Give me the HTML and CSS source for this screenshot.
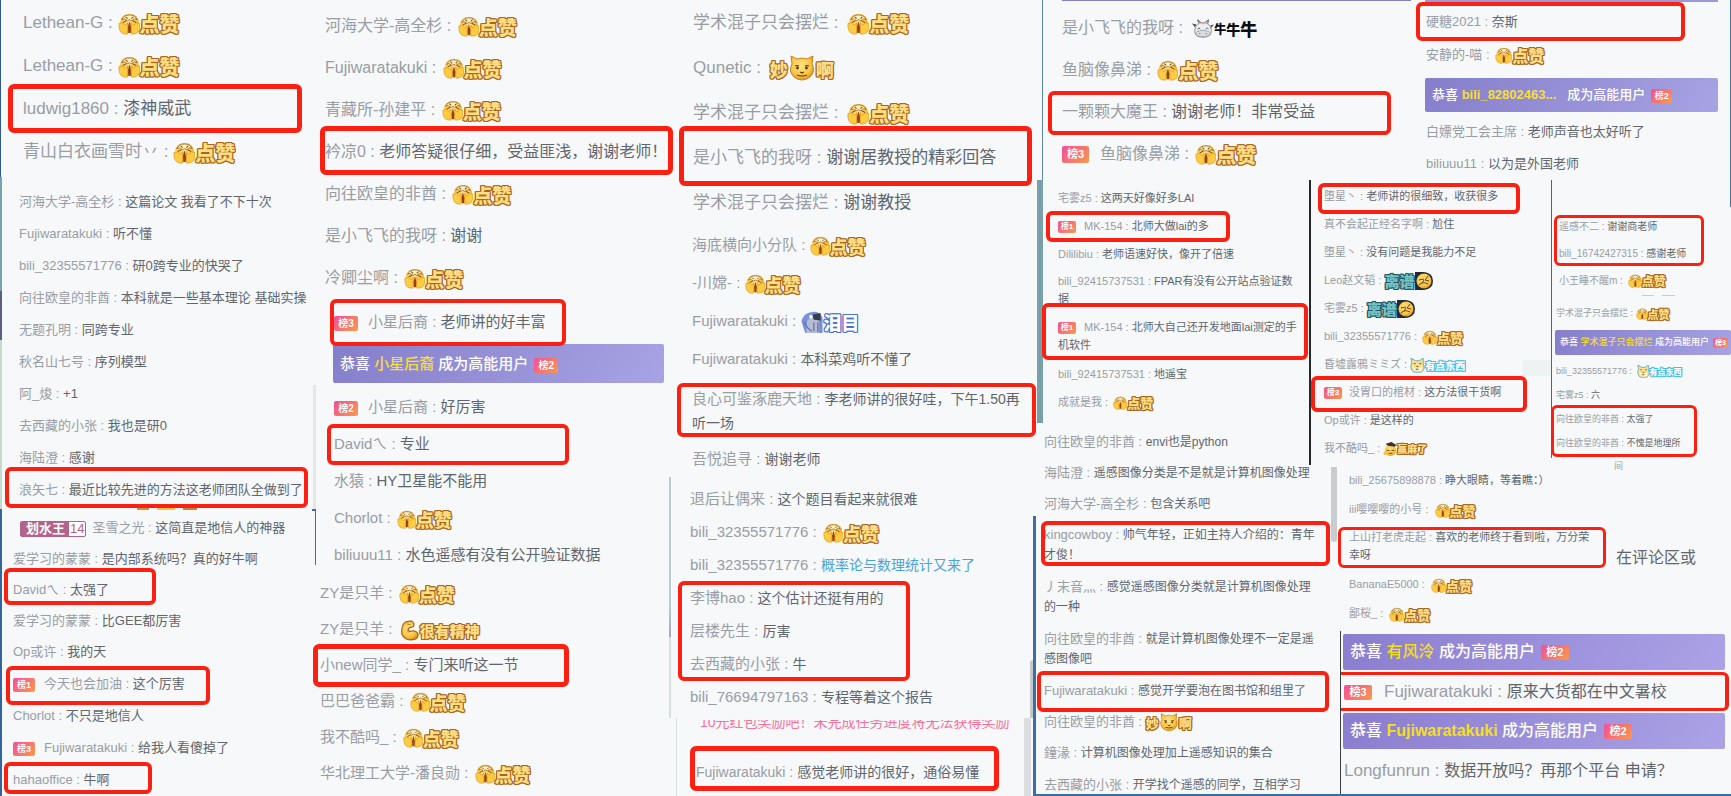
FILE: index.html
```html
<!DOCTYPE html>
<html lang="zh-CN">
<head>
<meta charset="utf-8">
<title>直播弹幕互动</title>
<link rel="stylesheet" href="styles.css">
</head>
<body>
<svg class="defs" aria-hidden="true">
  <defs>
    <radialGradient id="goldfill" cx="45%" cy="40%" r="65%"><stop offset="0" stop-color="#ffe58a"/><stop offset="0.65" stop-color="#fbc545"/><stop offset="1" stop-color="#d98a1c"/></radialGradient>
  </defs>
  <symbol id="like" viewBox="0 0 23 23">
    <path d="M2 11Q2 1 12 1t10 10-10 10T2 11z" fill="url(#goldfill)"/>
    <path d="M4 7q2-5 8-5t8 5q-3-2-4 0-2 2-4 0-2 2-4 0-1-2-4 0z" fill="#fff0bd" stroke="#8f5a20" stroke-width=".8"/>
    <path d="M8 4l2 2M16 4l-2 2M5 10l4-2M19 10l-4-2" fill="none" stroke="#7d4a18" stroke-width="1.1"/>
    <path d="M1 11q4-2 7 2l2-3v12q-8 1-9-7zM23 11q-4-2-7 2l-2-3v12q8 1 9-7z" fill="#ffcb40" stroke="#dc9524" stroke-width=".7"/>
    <path d="M12 9q2.500 6 1 12h-2q-1.500-6 1-12z" fill="#94400d"/>
  </symbol>
  <symbol id="wow" viewBox="0 0 28 28">
    <path d="M4 9L3 1l6 3q5-2 10 0l6-3-1 8q4 7-2 13-8 6-16 0Q0 16 4 9z" fill="url(#goldfill)" stroke="#c98318" stroke-width="1"/>
    <path d="M7 11q2-1 4 0M17 11q2-1 4 0M12 17l2 1 2-1M9 20q5 2 10 0" fill="none" stroke="#643710" stroke-width="1.2"/>
    <circle cx="9.500" cy="13" r="1.400" fill="#5f3711"/><circle cx="18.500" cy="13" r="1.400" fill="#5f3711"/>
  </symbol>
  <symbol id="cow" viewBox="0 0 24 22">
    <path d="M8 5L6 1l4 3M14 4l4-3-1 5" fill="#d8d8dd" stroke="#555960" stroke-width="1"/>
    <path d="M0 5l5 1-2 3zM24 6l-4 1 1 3z" fill="#50545b"/>
    <path d="M3 12Q4 4 12 4t9 8q1 8-9 8T3 12z" fill="#eceef1" stroke="#888d96" stroke-width="1"/>
    <path d="M9 4l3 2 3-2" fill="#e9a0ad"/>
    <ellipse cx="12" cy="16" rx="8" ry="3.500" fill="#d9dbe0" stroke="#888d96" stroke-width=".7"/>
    <path d="M6 11q2-2 3 0M15 11q2-2 3 0M8 16h1M15 16h1" fill="none" stroke="#50545b" stroke-width="1"/>
  </symbol>
  <symbol id="arm" viewBox="0 0 20 22">
    <path d="M2 15Q1 5 6 2l6-1q4 2 2 6l-4 1q-2 2 0 4 7-2 9 3 0 4-3 5-10 3-14-5z" fill="url(#goldfill)" stroke="#a86414" stroke-width="1.200"/>
    <path d="M7 4l4 1M9 8q-2 3 0 5" fill="none" stroke="#b8741b"/>
  </symbol>
  <symbol id="tear" viewBox="0 0 23 24">
    <path d="M1 11Q3 2 12 1q8-1 11 6v16H5z" fill="#7890d8"/>
    <path d="M7 10q5-5 12 0v13H6z" fill="#b7bdd0"/><path d="M12 4l9-2v8l-7-1z" fill="#343b50"/>
    <path d="M4 11q3 8 8 10M14 12v9M18 12v10" stroke="#6273ae" fill="none" stroke-width="1.300"/>
    <circle cx="11" cy="6" r="2" fill="#f1f3fa"/>
  </symbol>
  <symbol id="absurd" viewBox="0 0 18 18">
    <path d="M-4 0h13q9 1 9 9t-9 9H-4z" fill="#202a3c"/>
    <circle cx="9" cy="9" r="7.500" fill="url(#goldfill)"/>
    <path d="M4 8l5-1M13 4l-3 4 4 1M4 13q4-4 9-1M9 8l-2 3" fill="none" stroke="#65400f" stroke-width="1"/>
  </symbol>
  <symbol id="legit" viewBox="0 0 16 16">
    <path d="M2 5L1 0l5 3h4l4-3v6q3 6-2 9H4Q-1 11 2 5z" fill="#ffe08a" stroke="#56a9bd" stroke-width="1"/>
    <path d="M3 9q5 4 10 0l-1 5H5z" fill="#fff7dd"/><path d="M4 6h2M10 6h2M7 9h2M6 12h3" stroke="#5b4420" stroke-width="1"/>
  </symbol>
  <symbol id="win" viewBox="0 0 15 15">
    <circle cx="8" cy="9" r="6" fill="url(#goldfill)"/><path d="M3 2l6-2 5 3-1 2-8-1z" fill="#3c3330"/>
    <path d="M4 9h3M9 9h3M6 12h4" stroke="#6b4210"/><circle cx="2.500" cy="12" r="2" fill="#f8c340"/>
  </symbol>
</svg>

<main class="board">
  <div class="col">
    <section class="feed a">
      <ul>
        <li><span class="n">Lethean-G : </span><span class="emo gold"><svg><use href="#like"/></svg><b>点赞</b></span></li>
        <li><span class="n">Lethean-G : </span><span class="emo gold"><svg><use href="#like"/></svg><b>点赞</b></span></li>
        <li><span class="n">ludwig1860 : </span><span class="t">漆神威武</span><i class="mark mk-a"></i></li>
        <li><span class="n">青山白衣画雪时丷 : </span><span class="emo gold"><svg><use href="#like"/></svg><b>点赞</b></span></li>
      </ul>
    </section>
    <section class="feed b">
      <ul>
        <li><span class="n">河海大学-高全杉 : </span><span class="t">这篇论文 我看了不下十次</span></li>
        <li><span class="n">Fujiwaratakuki : </span><span class="t">听不懂</span></li>
        <li><span class="n">bili_32355571776 : </span><span class="t">研0跨专业的快哭了</span></li>
        <li><span class="n">向往欧皇的非酋 : </span><span class="t">本科就是一些基本理论 基础实操</span></li>
        <li><span class="n">无题孔明 : </span><span class="t">同跨专业</span></li>
        <li><span class="n">秋名山七号 : </span><span class="t">序列模型</span></li>
        <li><span class="n">阿_焌 : </span><span class="t">+1</span></li>
        <li><span class="n">去西藏的小张 : </span><span class="t">我也是研0</span></li>
        <li><span class="n">海陆澄 : </span><span class="t">感谢</span></li>
        <li><span class="n">浪矢七 : </span><span class="t">最近比较先进的方法这老师团队全做到了</span><i class="mark mk-b"></i></li>
      </ul>
    </section>
    <section class="feed c">
      <ul>
        <li><span class="medal"><b>划水王</b><span>14</span></span><span class="n">圣雪之光 : </span><span class="t">这简直是地信人的神器</span></li>
        <li><span class="n">爱学习的蒙蒙 : </span><span class="t">是内部系统吗？真的好牛啊</span></li>
        <li><span class="n">Davidㄟ : </span><span class="t">太强了</span><i class="mark mk-c1"></i></li>
        <li><span class="n">爱学习的蒙蒙 : </span><span class="t">比GEE都厉害</span></li>
        <li><span class="n">Op或许 : </span><span class="t">我的天</span></li>
        <li class="ranked"><b class="rank">榜1</b><span class="n">今天也会加油 : </span><span class="t">这个厉害</span><i class="mark mk-c2"></i></li>
        <li><span class="n">Chorlot : </span><span class="t">不只是地信人</span></li>
        <li class="ranked"><b class="rank">榜3</b><span class="n">Fujiwaratakuki : </span><span class="t">给我人看傻掉了</span></li>
        <li><span class="n">hahaoffice : </span><span class="t">牛啊</span><i class="mark mk-c3"></i></li>
      </ul>
    </section>
    <i class="strip s1"></i><i class="strip s2"></i><i class="strip s3"></i><i class="strip s4"></i><i class="strip s5"></i><i class="strip s6"></i><i class="strip s22"></i>
  </div>

  <div class="col">
    <section class="feed d">
      <ul>
        <li><span class="n">河海大学-高全杉 : </span><span class="emo gold"><svg><use href="#like"/></svg><b>点赞</b></span></li>
        <li><span class="n">Fujiwaratakuki : </span><span class="emo gold"><svg><use href="#like"/></svg><b>点赞</b></span></li>
        <li><span class="n">青藏所-孙建平 : </span><span class="emo gold"><svg><use href="#like"/></svg><b>点赞</b></span></li>
        <li><span class="n">衿凉0 : </span><span class="t">老师答疑很仔细，受益匪浅，谢谢老师！</span><i class="mark mk-d"></i></li>
        <li><span class="n">向往欧皇的非酋 : </span><span class="emo gold"><svg><use href="#like"/></svg><b>点赞</b></span></li>
        <li><span class="n">是小飞飞的我呀 : </span><span class="t">谢谢</span></li>
        <li><span class="n">冷卿尘啊 : </span><span class="emo gold"><svg><use href="#like"/></svg><b>点赞</b></span></li>
      </ul>
    </section>
    <section class="feed e">
      <ul>
        <li class="first"><b class="rank">榜3</b><span class="n">小星后裔 : </span><span class="t">老师讲的好丰富</span><i class="mark mk-e1"></i></li>
        <li class="banner">恭喜 <em>小星后裔</em> 成为高能用户<b class="rank">榜2</b></li>
        <li><b class="rank">榜2</b><span class="n">小星后裔 : </span><span class="t">好厉害</span></li>
        <li><span class="n">Davidㄟ : </span><span class="t">专业</span><i class="mark mk-e2"></i></li>
        <li><span class="n">水猿 : </span><span class="t">HY卫星能不能用</span></li>
        <li><span class="n">Chorlot : </span><span class="emo gold"><svg><use href="#like"/></svg><b>点赞</b></span></li>
        <li><span class="n">biliuuu11 : </span><span class="t">水色遥感有没有公开验证数据</span></li>
      </ul>
    </section>
    <section class="feed f">
      <ul>
        <li><span class="n">ZY是只羊 : </span><span class="emo gold"><svg><use href="#like"/></svg><b>点赞</b></span></li>
        <li><span class="n">ZY是只羊 : </span><span class="emo gold strong"><svg><use href="#arm"/></svg><b>很有精神</b></span></li>
        <li><span class="n">小new同学_ : </span><span class="t">专门来听这一节</span><i class="mark mk-f"></i></li>
        <li><span class="n">巴巴爸爸霸 : </span><span class="emo gold"><svg><use href="#like"/></svg><b>点赞</b></span></li>
        <li><span class="n">我不酷吗_ : </span><span class="emo gold"><svg><use href="#like"/></svg><b>点赞</b></span></li>
        <li><span class="n">华北理工大学-潘良勋 : </span><span class="emo gold"><svg><use href="#like"/></svg><b>点赞</b></span></li>
      </ul>
    </section>
    <i class="strip s7"></i><i class="strip s8"></i><i class="strip s9"></i>
  </div>

  <div class="col">
    <section class="feed g">
      <ul>
        <li><span class="n">学术混子只会摆烂 : </span><span class="emo gold"><svg><use href="#like"/></svg><b>点赞</b></span></li>
        <li><span class="n">Qunetic : </span><span class="emo gold wow"><b>妙</b><svg><use href="#wow"/></svg><b>啊</b></span></li>
        <li><span class="n">学术混子只会摆烂 : </span><span class="emo gold"><svg><use href="#like"/></svg><b>点赞</b></span></li>
        <li><span class="n">是小飞飞的我呀 : </span><span class="t">谢谢居教授的精彩回答</span><i class="mark mk-g"></i></li>
        <li><span class="n">学术混子只会摆烂 : </span><span class="t">谢谢教授</span></li>
      </ul>
    </section>
    <section class="feed h">
      <ul>
        <li><span class="n">海底横向小分队 : </span><span class="emo gold"><svg><use href="#like"/></svg><b>点赞</b></span></li>
        <li><span class="n">-川嫦- : </span><span class="emo gold"><svg><use href="#like"/></svg><b>点赞</b></span></li>
        <li><span class="n">Fujiwaratakuki : </span><span class="emo blue"><svg><use href="#tear"/></svg><b>泪目</b></span></li>
        <li><span class="n">Fujiwaratakuki : </span><span class="t">本科菜鸡听不懂了</span></li>
        <li class="two"><span class="n">良心可鉴涿鹿天地 : </span><span class="t">李老师讲的很好哇，下午1.50再<br>听一场</span><i class="mark mk-h"></i></li>
        <li><span class="n">吾悦追寻 : </span><span class="t">谢谢老师</span></li>
      </ul>
    </section>
    <section class="feed i">
      <ul>
        <li><span class="n">退后让偶来 : </span><span class="t">这个题目看起来就很难</span></li>
        <li><span class="n">bili_32355571776 : </span><span class="emo gold"><svg><use href="#like"/></svg><b>点赞</b></span></li>
        <li><span class="n">bili_32355571776 : </span><span class="t azure">概率论与数理统计又来了</span></li>
        <li><span class="n">李博hao : </span><span class="t">这个估计还挺有用的</span><i class="mark mk-i"></i></li>
        <li><span class="n">层楼先生 : </span><span class="t">厉害</span></li>
        <li><span class="n">去西藏的小张 : </span><span class="t">牛</span></li>
        <li><span class="n">bili_76694797163 : </span><span class="t">专程等着这个报告</span></li>
      </ul>
    </section>
    <section class="feed j">
      <div class="notice"><p>10元红包奖励吧！未完成任务进度将无法获得奖励</p></div>
      <ul>
        <li><span class="n">Fujiwaratakuki : </span><span class="t">感觉老师讲的很好，通俗易懂</span><i class="mark mk-j"></i></li>
      </ul>
    </section>
    <i class="strip s10"></i><i class="strip s11"></i><i class="strip s12"></i><i class="strip s13"></i><i class="strip s14"></i><i class="strip s15"></i>
  </div>

  <div class="col last">
    <div class="top">
      <section class="feed k">
        <ul>
          <li><span class="n">是小飞飞的我呀 : </span><span class="emo ink"><svg><use href="#cow"/></svg><b>牛</b><b class="mid">牛</b><b class="big">牛</b></span></li>
          <li><span class="n">鱼脑像鼻涕 : </span><span class="emo gold"><svg><use href="#like"/></svg><b>点赞</b></span></li>
          <li><span class="n">一颗颗大魔王 : </span><span class="t">谢谢老师！非常受益</span><i class="mark mk-k"></i></li>
          <li><b class="rank">榜3</b><span class="n">鱼脑像鼻涕 : </span><span class="emo gold"><svg><use href="#like"/></svg><b>点赞</b></span></li>
        </ul>
      </section>
      <section class="feed k2">
        <ul>
          <li class="upper"><span class="n">硬糖2021 : </span><span class="t">奈斯</span><i class="mark mk-k2"></i></li>
          <li class="upper"><span class="n">安静的-喵 : </span><span class="emo gold"><svg><use href="#like"/></svg><b>点赞</b></span></li>
          <li class="banner">恭喜 <em class="heavy">bili_82802463...</em> &nbsp; 成为高能用户<b class="rank">榜2</b></li>
          <li><span class="n">白嫖党工会主席 : </span><span class="t">老师声音也太好听了</span></li>
          <li><span class="n">biliuuu11 : </span><span class="t">以为是外国老师</span></li>
        </ul>
      </section>
      <i class="strip s16"></i><i class="strip s17"></i>
    </div>
    <div class="lower">
      <div class="left">
        <section class="feed l">
          <ul>
            <li><span class="n">宅雾z5 : </span><span class="t">这两天好像好多LAI</span></li>
            <li><b class="rank">榜1</b><span class="n">MK-154 : </span><span class="t">北师大做lai的多</span><i class="mark mk-l1"></i></li>
            <li><span class="n">Dililibiu : </span><span class="t">老师语速好快，像开了倍速</span></li>
            <li class="two"><span class="n">bili_92415737531 : </span><span class="t">FPAR有没有公开站点验证数<br>据</span></li>
            <li class="two"><b class="rank">榜1</b><span class="n">MK-154 : </span><span class="t">北师大自己还开发地面lai测定的手<br>机软件</span><i class="mark mk-l2"></i></li>
            <li><span class="n">bili_92415737531 : </span><span class="t">地遥宝</span></li>
            <li><span class="n">成就是我 : </span><span class="emo gold"><svg><use href="#like"/></svg><b>点赞</b></span></li>
          </ul>
        </section>
        <section class="feed o">
          <ul>
            <li><span class="n">向往欧皇的非酋 : </span><span class="t">envi也是python</span></li>
            <li><span class="n">海陆澄 : </span><span class="t">遥感图像分类是不是就是计算机图像处理</span></li>
            <li><span class="n">河海大学-高全杉 : </span><span class="t">包含关系吧</span></li>
            <li class="two"><span class="n">kingcowboy : </span><span class="t">帅气年轻，正如主持人介绍的：青年<br>才俊！</span><i class="mark mk-o1"></i></li>
            <li class="two"><span class="n">丿末音灬 : </span><span class="t">感觉遥感图像分类就是计算机图像处理<br>的一种</span></li>
            <li class="two"><span class="n">向往欧皇的非酋 : </span><span class="t">就是计算机图像处理不一定是遥<br>感图像吧</span></li>
            <li><span class="n">Fujiwaratakuki : </span><span class="t">感觉开学要泡在图书馆和组里了</span><i class="mark mk-o2"></i></li>
            <li><span class="n">向往欧皇的非酋 : </span><span class="emo gold wow"><b>妙</b><svg><use href="#wow"/></svg><b>啊</b></span></li>
            <li><span class="n">鐘湪 : </span><span class="t">计算机图像处理加上遥感知识的集合</span></li>
            <li><span class="n">去西藏的小张 : </span><span class="t">开学找个遥感的同学，互相学习</span></li>
          </ul>
        </section>
      </div>
      <div class="right">
        <div class="pair">
          <section class="feed m">
            <ul>
              <li><span class="n">堕星丶 : </span><span class="t">老师讲的很细致，收获很多</span><i class="mark mk-m1"></i></li>
              <li><span class="n">真不会起正经名字啊 : </span><span class="t">尬住</span></li>
              <li><span class="n">堕星丶 : </span><span class="t">没有问题是我能力不足</span></li>
              <li><span class="n">Leo赵文韬 : </span><span class="emo teal"><b>离谱</b><svg><use href="#absurd"/></svg></span></li>
              <li><span class="n">宅雾z5 : </span><span class="emo teal"><b>离谱</b><svg><use href="#absurd"/></svg></span></li>
              <li><span class="n">bili_32355571776 : </span><span class="emo gold"><svg><use href="#like"/></svg><b>点赞</b></span></li>
              <li><span class="n">昏墟露鴉ミミズ : </span><span class="emo sky"><svg><use href="#legit"/></svg><b>有点东西</b></span></li>
              <li><b class="rank">榜3</b><span class="n">没胃口的棺材 : </span><span class="t">这方法很干货啊</span><i class="mark mk-m2"></i></li>
              <li><span class="n">Op或许 : </span><span class="t">是这样的</span></li>
              <li><span class="n">我不酷吗_ : </span><span class="emo gold win"><svg><use href="#win"/></svg><b>赢麻了</b></span></li>
            </ul>
          </section>
          <section class="feed nn">
            <ul class="larger">
              <li><span class="n">遥感不二 : </span><span class="t">谢谢商老师</span><i class="mark mk-n1"></i></li>
              <li><span class="n">bili_16742427315 : </span><span class="t">感谢老师</span></li>
              <li><span class="n">小王睡不醒m : </span><span class="emo gold"><svg><use href="#like"/></svg><b>点赞</b></span></li>
            </ul>
            <ul class="smaller">
              <li class="first"><span class="n">学术混子只会摆烂 : </span><span class="emo gold"><svg><use href="#like"/></svg><b>点赞</b></span></li>
              <li class="banner">恭喜 <em>学术混子只会摆烂</em> 成为高能用户<b class="rank">榜3</b></li>
              <li><span class="n">bili_32355571776 : </span><span class="emo sky"><svg><use href="#legit"/></svg><b>有点东西</b></span></li>
              <li><span class="n">宅雾z5 : </span><span class="t">六</span></li>
              <li><span class="n">向往欧皇的非酋 : </span><span class="t">太强了</span><i class="mark mk-n2"></i></li>
              <li><span class="n">向往欧皇的非酋 : </span><span class="t">不愧是地理所</span></li>
            </ul>
          </section>
        </div>
        <div class="row">
          <section class="feed p">
            <ul>
              <li><span class="n">bili_25675898878 : </span><span class="t">睁大眼睛，等着瞧：）</span></li>
              <li><span class="n">iii嘤嘤嘤的小号 : </span><span class="emo gold"><svg><use href="#like"/></svg><b>点赞</b></span></li>
              <li class="two"><span class="n">上山打老虎走起 : </span><span class="t">喜欢的老师终于看到啦，万分荣<br>幸呀</span><i class="mark mk-p"></i></li>
              <li><span class="n">BananaE5000 : </span><span class="emo gold"><svg><use href="#like"/></svg><b>点赞</b></span></li>
              <li><span class="n">鄙桜_ : </span><span class="emo gold"><svg><use href="#like"/></svg><b>点赞</b></span></li>
            </ul>
          </section>
          <aside class="hint"><small>间</small><p>在评论区或</p></aside>
        </div>
        <section class="feed q">
          <ul>
            <li class="banner">恭喜 <em>有风泠</em> 成为高能用户<b class="rank">榜2</b></li>
            <li><b class="rank">榜3</b><span class="n">Fujiwaratakuki : </span><span class="t">原来大货都在中文暑校</span><i class="mark mk-q"></i></li>
            <li class="banner">恭喜 <em class="heavy">Fujiwaratakuki</em> 成为高能用户<b class="rank">榜2</b></li>
            <li><span class="n">Longfunrun : </span><span class="t">数据开放吗？再那个平台 申请？</span></li>
          </ul>
        </section>
        <i class="strip s18"></i><i class="strip s19"></i><i class="strip s23"></i>
      </div>
    </div>
    <i class="strip s20"></i><i class="strip s21"></i>
  </div>
</main>
</body>
</html>
```

FILE: styles.css
```css
* { box-sizing: border-box; }

body {
  margin: 0;
  background: #f6f8fa;
  color: #61666d;
  font-family: "Liberation Sans", "Noto Sans CJK SC", "Noto Sans CJK JP", sans-serif;
}

ul { list-style: none; margin: 0; padding: 0; }
p { margin: 0; }

.defs { position: absolute; width: 0; height: 0; }

.board {
  display: grid;
  grid-template-columns: 313fr 362fr 368fr 688fr;
  min-height: 100vh;
  overflow: hidden;
}

.col { position: relative; min-width: 0; }

/* message lists */
.feed { min-width: 0; white-space: nowrap; font-size: var(--name); line-height: var(--row); }
.feed li { position: relative; height: var(--row); white-space: pre; }
.feed li.two { height: auto; }
.n { color: #999da4; }
.t { font-size: var(--text, var(--name)); }
.azure { color: #4ba3dc; }

/* sticker: drawing plus outlined lettering */
.emo { display: inline-flex; align-items: center; height: var(--face); margin-left: var(--gap, 2px); vertical-align: middle; line-height: 1; }
.emo svg { flex: none; width: var(--face); height: var(--face); overflow: visible; }
.emo b {
  position: relative;
  z-index: 1;
  color: var(--fill);
  font-family: "Noto Sans CJK SC", sans-serif;
  font-size: var(--sticker);
  font-weight: 900;
  line-height: var(--face);
  text-shadow: 1px 0 var(--edge), -1px 0 var(--edge), 0 1px var(--edge), 0 -1px var(--edge), 1px 1px var(--edge), -1px -1px var(--edge), 1px -1px var(--edge), -1px 1px var(--edge);
}
.gold { --fill: #ffde85; --edge: #a9661f; }
.blue { --fill: #ffffff; --edge: #4a72cf; --face: 23px; }
.teal { --fill: #74c4c4; --edge: #1f5866; --face: 18px; --sticker: 15px; --gap: 0; }
.sky { --fill: #ffffff; --edge: #49bfe6; --gap: 0; }
.ink { --fill: #0c0c0e; --edge: transparent; --face: 22px; --sticker: 12px; --gap: 5px; }
.ink b { line-height: 26px; }
.ink .mid { font-size: 14px; }
.ink .big { font-size: 17px; }
.wow { --sticker: var(--small); --face: var(--cat); }
.strong { --sticker: 15px; --face: 21px; }
.win { --sticker: 10px; --face: 14px; --gap: 0; }

.rank {
  display: inline-block;
  width: var(--rw);
  height: var(--rh);
  margin-right: var(--rg);
  border-radius: 2px;
  background: linear-gradient(135deg, #f44d97, #fa9b4b);
  color: #fff;
  font-size: var(--rf);
  line-height: var(--rh);
  text-align: center;
  vertical-align: middle;
}

.medal {
  display: inline-flex;
  height: 16px;
  margin: 0 6px 0 7px;
  border: 1px solid #b3628a;
  border-radius: 2px;
  background: #fff;
  color: #b3628a;
  font-size: 13px;
  line-height: 14px;
  vertical-align: middle;
}
.medal b { padding: 0 4px 0 5px; background: #b3628a; color: #fff; }
.medal > span { padding: 0 1px; }

.banner {
  padding-left: 7px;
  border-radius: 2px;
  background: linear-gradient(120deg, #857ecb, #a7a3e3);
  color: #fff;
  font-weight: 500;
}
.banner em { color: #f7de36; font-style: normal; }
.banner .heavy { font-weight: 700; }
.banner .rank { margin: 0 0 0 6px; }

.notice { height: 11px; overflow: hidden; color: #fb7299; font-size: 14px; }
.notice p { margin: -8px 0 0 4px; line-height: 20px; }

/* segments */
.a { --name: 17px; --row: 43px; --face: 22px; --sticker: 20px; --gap: 0; padding: 1px 0 4px 23px; }
.b { --name: 13px; --row: 32px; padding: 9px 0 3px 19px; }
.c { --name: 13px; --row: 31px; --rw: 22px; --rh: 14px; --rg: 9px; --rf: 9px; padding: 3px 0 0 13px; }
.c .ranked { --row: 33px; line-height: 33px; }
.d { --name: 16px; --row: 42px; --face: 21px; --sticker: 19px; padding: 5px 0 0 12px; }
.e { --name: 15px; --row: 37px; --face: 19px; --sticker: 18px; --rw: 24px; --rh: 15px; --rg: 10px; --rf: 10px; padding-left: 21px; }
.e .first { --row: 45px; line-height: 45px; }
.e .banner { --row: 39px; margin: 0 11px 5px -1px; line-height: 39px; }
.f { --name: 15px; --row: 36px; --face: 20px; --sticker: 18px; padding: 2px 0 0 7px; }
.g { --name: 17px; --row: 45px; --face: 22px; --sticker: 20px; --small: 18px; --cat: 28px; --gap: 4px; padding-left: 18px; }
.h { --name: 15px; --text: 14px; --row: 38px; --face: 20px; --sticker: 18px; --gap: 0; padding: 1px 0 1px 17px; }
.h .two { padding: 9px 0 5px; line-height: 23px; }
.i { --name: 15px; --text: 14px; --row: 33px; --face: 20px; --sticker: 18px; padding: 3px 0 7px 15px; }
.j { --name: 14px; --row: 46px; padding-left: 21px; }
.j ul { margin-top: 18px; }

.top { position: relative; display: grid; grid-template-columns: 382fr 306fr; }
.k { --name: 16px; --row: 42px; --face: 21px; --sticker: 20px; --rw: 27px; --rh: 17px; --rg: 11px; --rf: 11px; padding: 7px 0 5px 19px; }
.k2 { --name: 13px; --row: 32px; --face: 17px; --sticker: 16px; --rw: 21px; --rh: 14px; --rf: 9px; padding: 5px 13px 0 0; }
.k2 li { margin-left: 1px; }
.k2 .upper { --row: 33px; line-height: 33px; }
.k2 .banner { --row: 34px; margin: 7px 0 4px; line-height: 34px; }

.lower { display: grid; grid-template-columns: 266fr 422fr; }
.left, .right { min-width: 0; }
.right { position: relative; }
.l { --name: 11px; --row: 28px; --face: 14px; --sticker: 13px; --rw: 18px; --rh: 12px; --rg: 8px; --rf: 8px; padding: 4px 0 0 15px; }
.l .two { padding: 4px 0 6px; line-height: 18px; }
.o { --name: 13px; --text: 12px; --row: 31px; --small: 13px; --cat: 20px; --gap: 0; padding: 10px 0 0 1px; }
.o .two { padding: 6px 0; line-height: 20px; }
.o li:last-child { height: 24px; line-height: 33px; }

.pair { display: grid; grid-template-columns: 242fr 180fr; align-items: start; padding-bottom: 1px; }
.m { --name: 11px; --row: 28px; --face: 15px; --sticker: 13px; --rw: 18px; --rh: 12px; --rg: 7px; --rf: 8px; padding: 2px 0 3px 13px; border-left: 2px solid #26282b; }
.m .sky { --sticker: 10px; }
.nn { padding-top: 33px; border-left: 1px solid #5d6064; --rw: 15px; --rh: 10px; --rf: 7px; padding-bottom: 3px; }
.larger { --name: 10px; --row: 27px; --face: 14px; --sticker: 12px; padding-left: 7px; font-size: 10px; line-height: 27px; }
.smaller { --name: 9px; --row: 24px; --face: 12px; --sticker: 11px; padding-left: 4px; font-size: 9px; line-height: 24px; }
.smaller .sky { --sticker: 8px; --face: 13px; --gap: 2px; }
.smaller .first { --row: 26px; --gap: 0; margin-top: 6px; line-height: 26px; }
.smaller .banner { --row: 25px; margin: 4px 0 4px -1px; padding-left: 5px; line-height: 25px; }
.smaller .banner .rank { margin-left: 4px; }

.row { display: grid; grid-template-columns: 305fr 117fr; }
.p { --name: 11px; --row: 29px; --face: 15px; --sticker: 13px; --gap: 3px; padding: 0 0 3px 40px; }
.p .two { padding: 4px 0 6px; line-height: 18px; }
.hint { color: #62666c; font-size: 16px; white-space: nowrap; }
.hint small { display: block; margin-top: -5px; color: #989ca3; font-size: 9px; line-height: 10px; }
.hint p { padding: 77px 0 0 2px; line-height: 20px; }
.q { --name: 17px; --text: 16px; --row: 43px; --rw: 28px; --rh: 15px; --rg: 12px; --rf: 11px; margin-left: 31px; padding: 3px 6px 4px 3px; border-left: 1px solid #3c3e42; }
.q .banner { --row: 36px; margin-left: -1px; font-size: 16px; line-height: 36px; background: linear-gradient(120deg, #8b7dcf, #aba2e6); }
.q .banner em { color: #f3df20; }

/* red highlight frames drawn over the messages */
.mark { position: absolute; border: 4px solid #fb2012; border-radius: 6px; pointer-events: none; z-index: 2; }
.mk-a { left: -15px; top: -3px; width: 294px; height: 49px; border-width: 5px; }
.mk-b { left: -14px; top: -7px; width: 303px; height: 41px; }
.mk-c1 { left: -9px; top: -6px; width: 152px; height: 37px; }
.mk-c2 { left: -7px; top: -1px; width: 204px; height: 39px; }
.mk-c3 { left: -9px; top: -2px; width: 148px; height: 32px; }
.mk-d { left: -5px; top: -5px; width: 353px; height: 49px; border-width: 5px; }
.mk-e1 { left: -4px; top: 0; width: 236px; height: 47px; }
.mk-e2 { left: -7px; top: -1px; width: 242px; height: 41px; }
.mk-f { left: -7px; top: -3px; width: 256px; height: 43px; border-width: 5px; }
.mk-g { left: -14px; top: -9px; width: 353px; height: 60px; border-width: 5px; }
.mk-h { left: -15px; top: 5px; width: 359px; height: 54px; }
.mk-i { left: -12px; top: 0; width: 232px; height: 100px; }
.mk-j { left: -6px; top: -3px; width: 309px; height: 45px; border-width: 5px; }
.mk-k { left: -14px; top: 0; width: 343px; height: 44px; }
.mk-k2 { left: -10px; top: -3px; width: 269px; height: 39px; }
.mk-l1 { left: -12px; top: -1px; width: 184px; height: 31px; }
.mk-l2 { left: -16px; top: -11px; width: 266px; height: 57px; }
.mk-m1 { left: -6px; top: 1px; width: 202px; height: 31px; }
.mk-m2 { left: -13px; top: -2px; width: 216px; height: 36px; }
.mk-n1 { left: -5px; top: 2px; width: 150px; height: 51px; border-width: 3px; }
.mk-n2 { left: -5px; top: -2px; width: 146px; height: 52px; border-width: 3px; }
.mk-o1 { left: -3px; top: 2px; width: 289px; height: 45px; }
.mk-o2 { left: -7px; top: -4px; width: 292px; height: 41px; }
.mk-p { left: -11px; top: 3px; width: 268px; height: 41px; border-width: 3px; }
.mk-q { left: -3px; top: 2px; width: 388px; height: 39px; border-width: 3px 4px 3px 0; border-radius: 0 6px 6px 0; }

/* slivers of neighbouring panes and scrollbars lying over the seams */
.strip { position: absolute; }
.s1 { left: 0; top: 0; width: 1px; height: 177px; background: #2f5c98; }
.s2 { left: 0; top: 177px; width: 2px; height: 114px; background: #74a3ad; }
.s3 { left: 0; top: 291px; width: 2px; height: 49px; background: #59617f; }
.s4 { left: 0; top: 340px; width: 2px; height: 169px; background: #c6d9cf; }
.s5 { left: 0; top: 509px; bottom: 0; width: 2px; background: #3465a0; }
.s6 { right: -3px; top: 385px; width: 3px; height: 124px; background: #e4e6e8; }
.s7 { left: -1px; top: 509px; width: 4px; height: 56px; border: solid #41719f; border-width: 2px 1px 0 0; }
.s8 { right: 4px; top: 477px; width: 2px; height: 160px; background: linear-gradient(#b9ccd3 80%, #a3a8bb); }
.s9 { right: 4px; top: 637px; width: 2px; height: 81px; background: #d5e0dc; }
.s10 { right: 0; top: 0; width: 1px; height: 180px; background: #5d86b4; }
.s11 { right: 0; top: 180px; width: 6px; height: 243px; background: #78a0a8; }
.s12 { right: 7px; top: 516px; bottom: 0; width: 3px; background: #3a6ea9; }
.s13 { right: 10px; top: 660px; width: 3px; height: 58px; border-radius: 3px 0 0; background: #c5c8ca; }
.s14 { right: 12px; top: 718px; bottom: 0; width: 7px; background: #dcdee0; }
.s15 { left: 1px; top: 718px; bottom: 0; width: 1px; background: #d5e0dc; }
.s16 { left: 19px; top: 0; width: 349px; height: 1px; background: #8680cb; }
.s17 { left: 382px; top: 0; width: 293px; height: 2px; background: #9c98dc; }
.s18 { left: 22px; top: 287px; width: 6px; height: 75px; border-radius: 0 0 3px 3px; background: #c9cbcc; }
.s19 { left: 214px; top: 180px; width: 27px; height: 16px; background: #edf3f3; }
.s20 { right: 0; top: 0; width: 1px; height: 207px; background: #3f71aa; }
.s21 { left: -7px; right: 0; bottom: 0; height: 2px; background: #3a6ea9; }
.s22 { left: 137px; top: 508px; width: 60px; height: 2px; background: linear-gradient(90deg, #c8943c 12px, transparent 12px 20px, #efc04c 20px 38px, transparent 38px 46px, #b98a3c 46px); }
.s23 { left: 333px; top: 115px; width: 33px; height: 1px; background: linear-gradient(90deg, #c9ccd1 12px, transparent 12px 20px, #c9ccd1 20px); }
```
